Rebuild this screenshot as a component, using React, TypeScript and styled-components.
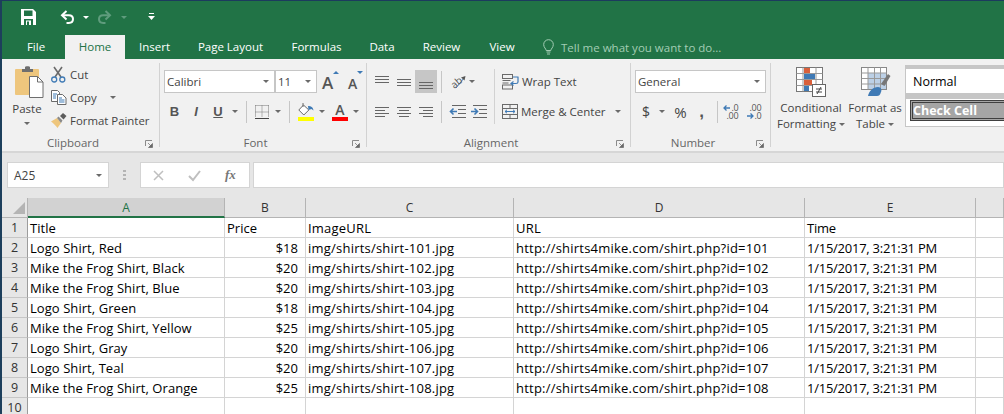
import React from 'react';
import styled, { createGlobalStyle } from 'styled-components';

const GlobalStyle = createGlobalStyle`
  html, body {
    margin: 0;
    padding: 0;
    background: #fff;
  }
  * {
    box-sizing: border-box;
  }
  svg {
    overflow: visible;
  }
`;

const FONT = `'Open Sans', 'Noto Sans', sans-serif`;

const Window = styled.div`
  width: 1004px;
  height: 414px;
  overflow: hidden;
  border-left: 2px solid #1d3f5c;
  border-top: 1px solid #1c3b5e;
  font-family: ${FONT};
  font-size: 12px;
  color: #444;
  display: flex;
  flex-direction: column;
`;

const TitleBar = styled.div`
  height: 34px;
  padding-bottom: 2px;
  background: #217346;
  display: flex;
  align-items: center;
`;

const Qat = styled.div<{ $w: number }>`
  width: ${(p) => p.$w}px;
  height: 100%;
  display: flex;
  align-items: center;
  justify-content: center;
`;

const TabBar = styled.div`
  height: 24px;
  background: #217346;
  display: flex;
  padding-left: 5px;
`;

const Tab = styled.div<{ $w: number; $active?: boolean }>`
  width: ${(p) => p.$w}px;
  text-align: center;
  line-height: 24px;
  font-size: 11.5px;
  color: ${(p) => (p.$active ? '#217346' : '#fff')};
  background: ${(p) => (p.$active ? '#f1f1f1' : 'transparent')};
`;

const TellMe = styled.div`
  margin-left: 14px;
  display: flex;
  align-items: center;
  gap: 7px;
  font-size: 11.5px;
  color: #a3cdb4;
`;

const Ribbon = styled.div`
  height: 94px;
  background: #f1f1f1;
  border-bottom: 2px solid #d6d6d6;
  padding-top: 4px;
  display: flex;
`;

const Group = styled.div<{ $w: number; $last?: boolean }>`
  width: ${(p) => p.$w}px;
  height: 84px;
  flex: none;
  display: flex;
  flex-direction: column;
  border-right: ${(p) => (p.$last ? 'none' : '1px solid #d2d2d2')};
`;

const GroupBody = styled.div`
  flex: 1;
  display: flex;
  min-height: 0;
`;

const GroupLabelRow = styled.div`
  height: 10px;
  display: flex;
  align-items: center;
`;

const GroupLabel = styled.div`
  flex: 1;
  text-align: center;
  font-size: 11.5px;
  color: #666;
`;

const Launcher = styled.div`
  width: 15px;
  display: flex;
  padding: 3px 0 0 1px;
`;

const PasteButton = styled.div`
  width: 40px;
  margin-left: 5px;
  padding-top: 3px;
  display: flex;
  flex-direction: column;
  align-items: center;
`;

const PasteArt = styled.div`
  margin-left: 4px;
  display: flex;
`;

const PasteLabel = styled.div`
  margin-top: 2px;
  line-height: 17px;
  font-size: 11.5px;
  color: #444;
`;

const ClipColumn = styled.div`
  margin-left: 4px;
  display: flex;
  flex-direction: column;
`;

const ClipRow = styled.div`
  height: 23px;
  display: flex;
  align-items: center;
  font-size: 11.4px;
  color: #444;
`;

const ClipIcon = styled.div`
  width: 19px;
  display: flex;
`;

const RowStack = styled.div<{ $pl: number }>`
  padding: 7px 0 0 ${(p) => p.$pl}px;
  display: flex;
  flex-direction: column;
  gap: 7px;
`;

const ToolRow = styled.div`
  height: 23px;
  display: flex;
  align-items: center;
`;

const Combo = styled.div<{ $w: number }>`
  width: ${(p) => p.$w}px;
  height: 23px;
  background: #fff;
  border: 1px solid #c6c6c6;
  display: flex;
  align-items: center;
  justify-content: space-between;
  padding: 0 5px 0 2px;
  font-size: 11.5px;
  color: #444;
`;

const Tool = styled.div<{ $w: number; $on?: boolean; $fs?: number }>`
  width: ${(p) => p.$w}px;
  height: 23px;
  flex: none;
  display: flex;
  align-items: center;
  justify-content: center;
  background: ${(p) => (p.$on ? '#c6c6c6' : 'transparent')};
  font-size: ${(p) => p.$fs ?? 14}px;
  color: #444;
`;

const Letter = styled.span<{ $i?: boolean; $u?: boolean }>`
  font-family: 'Liberation Sans', sans-serif;
  font-size: 13px;
  font-weight: 700;
  font-style: ${(p) => (p.$i ? 'italic' : 'normal')};
  text-decoration: ${(p) => (p.$u ? 'underline' : 'none')};
  color: #555;
`;

const CommaMark = styled.span`
  font-family: 'Liberation Sans', sans-serif;
  font-size: 17px;
  font-weight: 700;
  line-height: 14px;
  color: #555;
`;

const GrowTool = styled.div<{ $w: number; $pl: number }>`
  width: ${(p) => p.$w}px;
  height: 23px;
  flex: none;
  padding-left: ${(p) => p.$pl}px;
  display: flex;
  align-items: flex-start;
`;

const GrowLetter = styled.span<{ $s: number; $t: number }>`
  font-size: ${(p) => p.$s}px;
  font-weight: 600;
  line-height: 20px;
  margin-top: ${(p) => p.$t}px;
  color: #555;
`;

const GrowArrow = styled.span<{ $up?: boolean }>`
  width: 0;
  height: 0;
  margin-top: 1px;
  border-left: 3.5px solid transparent;
  border-right: 3.5px solid transparent;
  ${(p) => (p.$up ? 'border-bottom' : 'border-top')}: 3.5px solid #3f7ab5;
`;

const Sep = styled.div<{ $ml: number; $mr: number }>`
  width: 1px;
  height: 22px;
  flex: none;
  margin: 0 ${(p) => p.$mr}px 0 ${(p) => p.$ml}px;
  background: #c6c6c6;
`;

const TallSep = styled.div<{ $ml: number }>`
  width: 1px;
  height: 55px;
  margin: 6px 7px 0 ${(p) => p.$ml}px;
  background: #d2d2d2;
`;

const WideAction = styled.div<{ $gap: number }>`
  height: 23px;
  display: flex;
  align-items: center;
  gap: ${(p) => p.$gap}px;
  font-size: 11.5px;
  color: #444;
`;

const Caret = styled.span<{ $ml?: number; $mt?: number; $c?: string }>`
  display: inline-block;
  flex: none;
  width: 0;
  height: 0;
  margin-left: ${(p) => p.$ml ?? 0}px;
  margin-top: ${(p) => p.$mt ?? 0}px;
  vertical-align: middle;
  border-left: 3.5px solid transparent;
  border-right: 3.5px solid transparent;
  border-top: 3.5px solid ${(p) => p.$c ?? '#6a6a6a'};
`;

const DecimalStack = styled.div`
  display: grid;
  grid-template-columns: 8px 8px;
  grid-auto-rows: 8px;
  font-size: 9px;
  line-height: 8px;
  color: #555;
  letter-spacing: -0.2px;
`;

const DecimalText = styled.span<{ $full?: boolean }>`
  grid-column: ${(p) => (p.$full ? '1 / 3' : '2')};
  text-align: right;
`;

const BigButton = styled.div<{ $w: number; $ml?: number }>`
  width: ${(p) => p.$w}px;
  margin-left: ${(p) => p.$ml ?? 0}px;
  flex: none;
  padding-top: 4px;
  display: flex;
  flex-direction: column;
  align-items: center;
`;

const BigArt = styled.div<{ $ml?: number }>`
  margin-left: ${(p) => p.$ml ?? 0}px;
  display: flex;
`;

const BigLabel = styled.div`
  margin-top: 3px;
  line-height: 16px;
  font-size: 11.5px;
  color: #444;
  text-align: center;
  white-space: nowrap;
`;

const Gallery = styled.div`
  width: 110px;
  height: 62px;
  margin: 2px 0 0 3px;
  flex: none;
  background: #fff;
  border: 1px solid #c6c6c6;
  border-top-width: 4px;
  display: flex;
  flex-direction: column;
`;

const NormalStyle = styled.div`
  height: 24px;
  padding-left: 7px;
  line-height: 25px;
  font-size: 12.5px;
  color: #000;
`;

const Band = styled.div`
  height: 6px;
  background: #c6c6c6;
`;

const CheckStyle = styled.div`
  height: 21px;
  margin: 1px 0 0 4px;
  border: 3px double #3f3f3f;
  background: #a5a5a5;
  color: #fff;
  font-weight: 700;
  font-size: 12.5px;
  line-height: 15px;
`;

const FormulaBar = styled.div`
  height: 45px;
  background: #e6e6e6;
  padding: 9px 0 0 5px;
  display: flex;
  align-items: flex-start;
`;

const NameBox = styled.div`
  width: 102px;
  height: 26px;
  background: #fff;
  border: 1px solid #d4d4d4;
  display: flex;
  align-items: center;
  justify-content: space-between;
  padding: 0 6px;
  font-size: 12px;
  color: #444;
`;

const Grip = styled.div`
  width: 31px;
  height: 26px;
  display: flex;
  align-items: center;
  justify-content: center;
`;

const FxBox = styled.div`
  width: 110px;
  height: 26px;
  background: #fff;
  border: 1px solid #d4d4d4;
  display: flex;
  align-items: center;
  padding-left: 12px;
  gap: 24px;
`;

const FormulaInput = styled.div`
  flex: 1;
  height: 26px;
  margin-left: 3px;
  background: #fff;
  border: 1px solid #d4d4d4;
`;

const Sheet = styled.div`
  flex: 1;
  display: grid;
  grid-template-columns: 26px 197px 81px 208px 291px 171px 28px;
  grid-template-rows: repeat(11, 20px);
  font-size: 13px;
  color: #000;
  overflow: hidden;
`;

const Corner = styled.div`
  background: #e6e6e6;
  border-right: 1px solid #b4b4b4;
  border-bottom: 1px solid #b4b4b4;
  display: flex;
  align-items: flex-end;
  justify-content: flex-end;
  padding: 0 2px 3px 0;
`;

const ColHead = styled.div<{ $on?: boolean }>`
  background: ${(p) => (p.$on ? '#d2d2d2' : '#e6e6e6')};
  color: ${(p) => (p.$on ? '#217346' : '#333')};
  border-right: 1px solid #b4b4b4;
  border-bottom: ${(p) => (p.$on ? '2px solid #217346' : '1px solid #b4b4b4')};
  display: flex;
  align-items: center;
  justify-content: center;
  font-size: 12px;
`;

const RowHead = styled.div`
  background: #e6e6e6;
  color: #333;
  border-right: 1px solid #9c9c9c;
  border-bottom: 1px solid #c6c6c6;
  display: flex;
  align-items: center;
  justify-content: center;
  font-size: 12.5px;
`;

const Cell = styled.div<{ $right?: boolean; $track: number }>`
  background: #fff;
  border-right: 1px solid #d4d4d4;
  border-bottom: 1px solid #d4d4d4;
  line-height: 20px;
  padding: 0 ${(p) => (p.$right ? 7 : 1)}px 0 2px;
  text-align: ${(p) => (p.$right ? 'right' : 'left')};
  letter-spacing: ${(p) => p.$track}px;
  white-space: nowrap;
`;

const BLUE = '#3f7ab5';

const SaveIcon = () => (
  <svg width="15" height="16" viewBox="0 0 15 16">
    <path d="M0 0h12l3 3v13H0z" fill="#fff" />
    <rect x="3" y="1.5" width="8.500" height="5.500" fill="#217346" />
    <rect x="3" y="10" width="9" height="6" fill="#217346" />
    <rect x="5" y="11.5" width="5" height="4.500" fill="#fff" />
    <rect x="6" y="12.5" width="2" height="3.500" fill="#217346" />
  </svg>
);

const UndoIcon = ({ color, flip }: { color: string; flip?: boolean }) => (
  <svg width="15" height="15" viewBox="0 0 15 15" style={flip ? { transform: 'scaleX(-1)' } : undefined}>
    <path d="M6.500 1 2 5.200l4.500 4.300" fill="none" stroke={color} strokeWidth="2" />
    <path d="M2.500 5.200h6.300c2.600 0 4.200 1.700 4.200 3.900s-1.600 3.900-4.200 3.900H6.500" fill="none" stroke={color} strokeWidth="2" />
  </svg>
);

const CustomizeIcon = () => (
  <svg width="7" height="8" viewBox="0 0 7 8">
    <rect x="1" y="0" width="5" height="1" fill="#fff" />
    <path d="M0 3h7L3.500 7z" fill="#fff" />
  </svg>
);

const BulbIcon = () => (
  <svg width="11" height="17" viewBox="0 0 11 17">
    <path d="M3.200 11.500C3 9.600.7 8.600.7 5.500a4.800 4.800 0 0 1 9.600 0c0 3.100-2.300 4.100-2.500 6z" fill="none" stroke="#a3cdb4" />
    <path d="M3.500 13h4M4 15h3" stroke="#a3cdb4" />
  </svg>
);

const LauncherIcon = () => (
  <svg width="8" height="8" viewBox="0 0 8 8">
    <path d="M.5 6V.5H7" fill="none" stroke="#8a8a8a" />
    <path d="M3 3l3 3M7.500 3.500v4h-4z" fill="#6a6a6a" stroke="#6a6a6a" strokeWidth="0.7" />
  </svg>
);

const PasteIcon = () => (
  <svg width="29" height="32" viewBox="0 0 29 32">
    <rect x="0" y="3" width="24" height="26" rx="1" fill="#eec67d" />
    <path d="M7 3h3V1c0-1 5-1 5 0v2h3v3H7z" fill="#6e6e6e" />
    <path d="M14.500 10.500h8l5.500 5.500v15.500H14.500z" fill="#fff" stroke="#6e6e6e" />
    <path d="M22.500 10.500V16H28" fill="none" stroke="#6e6e6e" />
  </svg>
);

const CutIcon = () => (
  <svg width="15" height="16" viewBox="0 0 15 16">
    <path d="M3 0l7 10M11 0 4 10" stroke="#6a6a6a" strokeWidth="1.600" fill="none" />
    <circle cx="3.200" cy="12.500" r="2.500" fill="none" stroke={BLUE} strokeWidth="1.300" />
    <circle cx="11.300" cy="12.500" r="2.500" fill="none" stroke={BLUE} strokeWidth="1.300" />
  </svg>
);

const CopyIcon = () => (
  <svg width="16" height="15" viewBox="0 0 16 15">
    <path d="M.5.500h6l2 2v9h-8z" fill="#fff" stroke="#6a6a6a" />
    <path d="M6.500 4.500h5l3.500 3.500v6.500H6.500z" fill="#fff" stroke="#6a6a6a" />
    <path d="M2 4h4M2 6h3M2 8h3M8 8h3M8 10h5.500M8 12h5.500" stroke={BLUE} />
  </svg>
);

const PainterIcon = () => (
  <svg width="16" height="15" viewBox="0 0 16 15">
    <path d="M0 8.500 6 5l4 5-3.500 5C5 13 2 10 0 8.500z" fill="#eec67d" />
    <path d="M6 5l1.500-1.500 4 4L10 10z" fill="#8a8a8a" />
    <path d="M9 3l3-3 3.500 3-3 3.500z" fill="#5c5c5c" />
  </svg>
);

const BorderIcon = () => (
  <svg width="14" height="14" viewBox="0 0 14 14">
    <path d="M.5.500h13M.5 7h13M.5.500v12M7 .5v12M13.500.500v12" stroke="#777" strokeDasharray="1 1" fill="none" />
    <path d="M0 13.500h14" stroke="#444" />
  </svg>
);

const FillIcon = () => (
  <svg width="17" height="18" viewBox="0 0 17 18">
    <path d="M5.500 2 .8 7l5 5 5-5z" fill="#fff" stroke="#6a6a6a" />
    <path d="M5 0v4" stroke="#6a6a6a" />
    <path d="M10 3c3 0 5 1 5.500 4.500L13.500 6l-3 1z" fill={BLUE} />
    <rect x="0" y="14" width="16" height="4" fill="#ffff00" />
  </svg>
);

const FontColorTool = styled.div`
  width: 16px;
  display: flex;
  flex-direction: column;
  align-items: center;
  font-size: 14px;
  font-weight: 600;
  line-height: 15px;
  color: #555;
`;

const FontColorBar = styled.div`
  width: 16px;
  height: 4px;
  background: #ff0000;
`;

const Lines = ({ rows }: { rows: [number, number, number][] }) => (
  <svg width="14" height="14" viewBox="0 0 14 14">
    {rows.map(([x, y, len], i) => (
      <rect key={i} x={x} y={y} width={len} height="1" fill="#666" />
    ))}
  </svg>
);

const OrientWrap = styled.div`
  width: 20px;
  height: 17px;
  display: flex;
  align-items: center;
`;

const OrientMark = styled.span`
  display: inline-block;
  font-size: 10px;
  line-height: 10px;
  color: #555;
  transform: rotate(-40deg) translate(1px, 1px);
`;

const OrientArrowSlot = styled.span`
  display: flex;
  margin-left: -5px;
`;

const OrientArrow = () => (
  <svg width="10" height="14" viewBox="0 0 10 14">
    <path d="M0 13 8 3" stroke={BLUE} />
    <path d="M5 2.500 9.500 1l-1 4.500z" fill="#555" />
  </svg>
);

const IndentIcon = ({ flip }: { flip?: boolean }) => (
  <svg width="17" height="13" viewBox="0 0 17 13">
    <path d="M3 .5h14M9 4.500h8M9 8.500h8M3 12.500h14" stroke="#666" />
    {flip ? (
      <path d="M1 6.500h6M4.500 3.500l3 3-3 3" stroke={BLUE} strokeWidth="1.600" fill="none" />
    ) : (
      <path d="M8 6.500H1.500M4.500 3.500l-3 3 3 3" stroke={BLUE} strokeWidth="1.600" fill="none" />
    )}
  </svg>
);

const WrapIcon = () => (
  <svg width="17" height="16" viewBox="0 0 17 16">
    <rect x=".5" y=".5" width="10" height="4" fill="none" stroke="#6a6a6a" />
    <rect x=".5" y="11" width="10" height="4" fill="none" stroke="#6a6a6a" />
    <path d="M.5 6.500h8M.5 9h6" stroke="#6a6a6a" />
    <path d="M11 3h5.500M16 3v5c0 1-1 1.500-2 1.500H9M11.500 7.500l-2.500 2 2.500 2" fill="none" stroke={BLUE} strokeWidth="1.200" />
  </svg>
);

const MergeIcon = () => (
  <svg width="16" height="15" viewBox="0 0 16 15">
    <rect x=".5" y=".5" width="15" height="14" fill="none" stroke="#6a6a6a" />
    <path d="M.5 4.500h15M.5 10.500h15M8 .5v4M8 10.500v4" stroke="#6a6a6a" />
    <path d="M3 7.500h10M5 5.800 3 7.500l2 1.700M11 5.800l2 1.700-2 1.700" fill="none" stroke={BLUE} />
  </svg>
);

const ArrowLeft = () => (
  <svg width="8" height="8" viewBox="0 0 8 8">
    <path d="M7 4H1M3.500 1.500 1 4l2.500 2.500" fill="none" stroke={BLUE} strokeWidth="1.300" />
  </svg>
);

const ArrowRight = () => (
  <svg width="8" height="8" viewBox="0 0 8 8">
    <path d="M1 4h6M4.500 1.500 7 4 4.500 6.500" fill="none" stroke={BLUE} strokeWidth="1.300" />
  </svg>
);

const CondFormatIcon = () => (
  <svg width="30" height="30" viewBox="0 0 30 30">
    <rect x=".5" y=".5" width="26" height="24" fill="#fff" stroke="#777" />
    <path d="M7 .5v24M20 .5v24M.5 6.500h26M.5 12.500h26M.5 18.500h26" stroke="#999" />
    <rect x="8" y="1" width="6" height="5" fill="#d9603b" />
    <rect x="8" y="7" width="11" height="5" fill="#3f7ab5" />
    <rect x="8" y="13" width="8" height="5" fill="#d9603b" />
    <rect x="8" y="19" width="5" height="5" fill="#3f7ab5" />
    <rect x="16.500" y="17.500" width="13" height="12" fill="#fff" stroke="#666" />
    <path d="M20 22h6M20 25h6M25 20l-4 7" stroke="#444" />
  </svg>
);

const TableIcon = () => (
  <svg width="30" height="30" viewBox="0 0 30 30">
    <rect x=".5" y=".5" width="25" height="22" fill="#fff" stroke="#888" />
    <rect x="7" y="6" width="18" height="16" fill="#bcd0e6" />
    <path d="M7 .5v22M13.500 .5v22M19.500 .5v22M.5 6h25M.5 11.500h25M.5 17h25" stroke="#999" />
    <path d="M20 17 27 7l2.500 2-6 10z" fill="#777" />
    <path d="M7 29c1-5 5-9 10-9 3 0 4 3 3 5-1 3-2 4-4 4z" fill="#3f7ab5" />
  </svg>
);

const XIcon = () => (
  <svg width="11" height="11" viewBox="0 0 11 11">
    <path d="M1 1l9 9M10 1l-9 9" stroke="#bfbfbf" strokeWidth="1.500" />
  </svg>
);

const CheckIcon = () => (
  <svg width="13" height="11" viewBox="0 0 13 11">
    <path d="M1 6l4 4 7-9" fill="none" stroke="#bfbfbf" strokeWidth="2" />
  </svg>
);

const FxMark = styled.span`
  font-family: 'Liberation Serif', serif;
  font-style: italic;
  font-weight: 700;
  font-size: 13px;
  color: #777;
`;

const GripDots = () => (
  <svg width="3" height="11" viewBox="0 0 3 11">
    <path d="M0 0h3v2H0zM0 4h3v2H0zM0 8h3v2H0z" fill="#b4b4b4" />
  </svg>
);

const CornerTriangle = () => (
  <svg width="12" height="12" viewBox="0 0 12 12">
    <path d="M12 0v12H0z" fill="#b4b4b4" />
  </svg>
);

interface Shirt {
  title: string;
  price: string;
  id: number;
}

const SHIRTS: Shirt[] = [
  { title: 'Logo Shirt, Red', price: '$18', id: 101 },
  { title: 'Mike the Frog Shirt, Black', price: '$20', id: 102 },
  { title: 'Mike the Frog Shirt, Blue', price: '$20', id: 103 },
  { title: 'Logo Shirt, Green', price: '$18', id: 104 },
  { title: 'Mike the Frog Shirt, Yellow', price: '$25', id: 105 },
  { title: 'Logo Shirt, Gray', price: '$20', id: 106 },
  { title: 'Logo Shirt, Teal', price: '$20', id: 107 },
  { title: 'Mike the Frog Shirt, Orange', price: '$25', id: 108 },
];

// the last column only peeks in at the right edge, its letter is out of view
const COLS = ['A', 'B', 'C', 'D', 'E', ''];
const TRACKING = [0.06, 0, 0.22, 0.22, -0.25, 0];
const TIME = '1/15/2017, 3:21:31 PM';

const App: React.FC = () => {
  function renderRow(num: number, cells: string[], rightIndex?: number) {
    return (
      <React.Fragment key={`row_${num}`}>
        <RowHead>{num}</RowHead>
        {COLS.map((col, i) => (
          <Cell key={`cell_${i}_${num}`} $right={i === rightIndex} $track={TRACKING[i]}>
            {cells[i] ?? ''}
          </Cell>
        ))}
      </React.Fragment>
    );
  }

  return (
    <Window>
      <GlobalStyle />
      <TitleBar>
        <Qat $w={52}><SaveIcon /></Qat>
        <Qat $w={27}><UndoIcon color="#fff" /></Qat>
        <Qat $w={10}><Caret $c="#fff" /></Qat>
        <Qat $w={27}><UndoIcon color="#5f9c7d" flip /></Qat>
        <Qat $w={11}><Caret $c="#5f9c7d" /></Qat>
        <Qat $w={45}><CustomizeIcon /></Qat>
      </TitleBar>
      <TabBar>
        <Tab $w={58}>File</Tab>
        <Tab $w={60} $active>Home</Tab>
        <Tab $w={59}>Insert</Tab>
        <Tab $w={93}>Page Layout</Tab>
        <Tab $w={79}>Formulas</Tab>
        <Tab $w={52}>Data</Tab>
        <Tab $w={67}>Review</Tab>
        <Tab $w={54}>View</Tab>
        <TellMe>
          <BulbIcon />
          Tell me what you want to do...
        </TellMe>
      </TabBar>
      <Ribbon>
        <Group $w={158}>
          <GroupBody>
            <PasteButton>
              <PasteArt><PasteIcon /></PasteArt>
              <PasteLabel>Paste</PasteLabel>
              <Caret $mt={5} />
            </PasteButton>
            <ClipColumn>
              <ClipRow><ClipIcon><CutIcon /></ClipIcon>Cut</ClipRow>
              <ClipRow><ClipIcon><CopyIcon /></ClipIcon>Copy<Caret $ml={13} /></ClipRow>
              <ClipRow><ClipIcon><PainterIcon /></ClipIcon>Format Painter</ClipRow>
            </ClipColumn>
          </GroupBody>
          <GroupLabelRow>
            <GroupLabel>Clipboard</GroupLabel>
            <Launcher><LauncherIcon /></Launcher>
          </GroupLabelRow>
        </Group>
        <Group $w={207}>
          <GroupBody>
            <RowStack $pl={4}>
              <ToolRow>
                <Combo $w={111}>Calibri<Caret /></Combo>
                <Combo $w={42}>11<Caret /></Combo>
                <GrowTool $w={25} $pl={5}>
                  <GrowLetter $s={17} $t={3}>A</GrowLetter>
                  <GrowArrow $up />
                </GrowTool>
                <GrowTool $w={22} $pl={6}>
                  <GrowLetter $s={14} $t={4}>A</GrowLetter>
                  <GrowArrow />
                </GrowTool>
              </ToolRow>
              <ToolRow>
                <Tool $w={21}><Letter>B</Letter></Tool>
                <Tool $w={22}><Letter $i>I</Letter></Tool>
                <Tool $w={22}><Letter $u>U</Letter></Tool>
                <Tool $w={12}><Caret /></Tool>
                <Sep $ml={5} $mr={8} />
                <Tool $w={14}><BorderIcon /></Tool>
                <Tool $w={18}><Caret /></Tool>
                <Sep $ml={2} $mr={7} />
                <Tool $w={18}><FillIcon /></Tool>
                <Tool $w={14}><Caret /></Tool>
                <Tool $w={22}>
                  <FontColorTool>A<FontColorBar /></FontColorTool>
                </Tool>
                <Tool $w={10}><Caret /></Tool>
              </ToolRow>
            </RowStack>
          </GroupBody>
          <GroupLabelRow>
            <GroupLabel>Font</GroupLabel>
            <Launcher><LauncherIcon /></Launcher>
          </GroupLabelRow>
        </Group>
        <Group $w={264}>
          <GroupBody>
            <RowStack $pl={4}>
              <ToolRow>
                <Tool $w={22}><Lines rows={[[0, 1, 14], [0, 4, 14], [0, 7, 14]]} /></Tool>
                <Tool $w={22}><Lines rows={[[0, 4, 14], [0, 7, 14], [0, 10, 14]]} /></Tool>
                <Tool $w={22} $on><Lines rows={[[0, 7, 14], [0, 10, 14], [0, 13, 14]]} /></Tool>
                <Sep $ml={4} $mr={7} />
                <OrientWrap>
                  <OrientMark>ab</OrientMark>
                  <OrientArrowSlot><OrientArrow /></OrientArrowSlot>
                </OrientWrap>
                <Tool $w={5}><Caret /></Tool>
              </ToolRow>
              <ToolRow>
                <Tool $w={22}><Lines rows={[[0, 2, 14], [0, 5, 10], [0, 8, 14], [0, 11, 10]]} /></Tool>
                <Tool $w={22}><Lines rows={[[0, 2, 14], [2, 5, 10], [0, 8, 14], [2, 11, 10]]} /></Tool>
                <Tool $w={22}><Lines rows={[[0, 2, 14], [4, 5, 10], [0, 8, 14], [4, 11, 10]]} /></Tool>
                <Sep $ml={4} $mr={7} />
                <Tool $w={17}><IndentIcon /></Tool>
                <Tool $w={4} />
                <Tool $w={17}><IndentIcon flip /></Tool>
              </ToolRow>
            </RowStack>
            <TallSep $ml={7} />
            <RowStack $pl={0}>
              <WideAction $gap={3}><WrapIcon />Wrap Text</WideAction>
              <WideAction $gap={3}><MergeIcon />Merge &amp; Center<Caret $ml={6} /></WideAction>
            </RowStack>
          </GroupBody>
          <GroupLabelRow>
            <GroupLabel>Alignment</GroupLabel>
            <Launcher><LauncherIcon /></Launcher>
          </GroupLabelRow>
        </Group>
        <Group $w={140}>
          <GroupBody>
            <RowStack $pl={4}>
              <ToolRow>
                <Combo $w={131}>General<Caret /></Combo>
              </ToolRow>
              <ToolRow>
                <Tool $w={22}>$</Tool>
                <Tool $w={9}><Caret /></Tool>
                <Tool $w={29} $fs={15}>%</Tool>
                <Tool $w={13}><CommaMark>,</CommaMark></Tool>
                <Sep $ml={9} $mr={4} />
                <Tool $w={17}>
                  <DecimalStack>
                    <ArrowLeft />
                    <DecimalText>.0</DecimalText>
                    <DecimalText $full>.00</DecimalText>
                  </DecimalStack>
                </Tool>
                <Tool $w={6} />
                <Tool $w={17}>
                  <DecimalStack>
                    <DecimalText $full>.00</DecimalText>
                    <ArrowRight />
                    <DecimalText>.0</DecimalText>
                  </DecimalStack>
                </Tool>
              </ToolRow>
            </RowStack>
          </GroupBody>
          <GroupLabelRow>
            <GroupLabel>Number</GroupLabel>
            <Launcher><LauncherIcon /></Launcher>
          </GroupLabelRow>
        </Group>
        <Group $w={233} $last>
          <GroupBody>
            <BigButton $w={74} $ml={3}>
              <CondFormatIcon />
              <BigLabel>
                Conditional
                <br />
                Formatting <Caret />
              </BigLabel>
            </BigButton>
            <BigButton $w={54}>
              <BigArt $ml={2}><TableIcon /></BigArt>
              <BigLabel>
                Format as
                <br />
                Table <Caret />
              </BigLabel>
            </BigButton>
            <Gallery>
              <NormalStyle>Normal</NormalStyle>
              <Band />
              <CheckStyle>Check Cell</CheckStyle>
            </Gallery>
          </GroupBody>
        </Group>
      </Ribbon>
      <FormulaBar>
        <NameBox>A25<Caret /></NameBox>
        <Grip><GripDots /></Grip>
        <FxBox>
          <XIcon />
          <CheckIcon />
          <FxMark>fx</FxMark>
        </FxBox>
        <FormulaInput />
      </FormulaBar>
      <Sheet>
        <Corner><CornerTriangle /></Corner>
        {COLS.map((col, i) => (
          <ColHead key={`head_${i}`} $on={i === 0}>{col}</ColHead>
        ))}
        {renderRow(1, ['Title', 'Price', 'ImageURL', 'URL', 'Time'])}
        {SHIRTS.map((shirt, i) =>
          renderRow(
            i + 2,
            [
              shirt.title,
              shirt.price,
              `img/shirts/shirt-${shirt.id}.jpg`,
              `http://shirts4mike.com/shirt.php?id=${shirt.id}`,
              TIME,
            ],
            1,
          ),
        )}
        {renderRow(10, [])}
      </Sheet>
    </Window>
  );
};

export default App;
